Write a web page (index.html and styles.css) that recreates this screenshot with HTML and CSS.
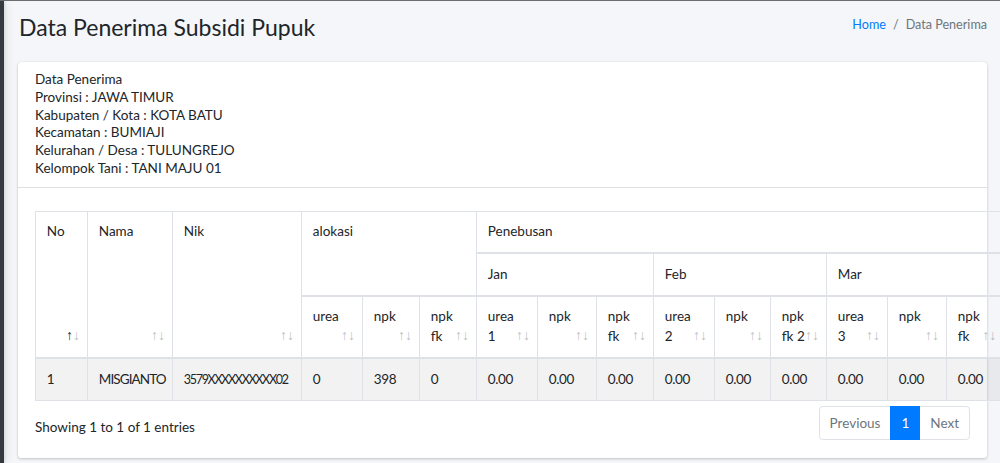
FILE: index.html
```html
<!DOCTYPE html>
<html lang="id">
<head>
<meta charset="utf-8">
<title>Data Penerima Subsidi Pupuk</title>
<link rel="stylesheet" href="styles.css">
</head>
<body>
<div class="topline"></div>
<div class="layout">
  <aside class="sidebar"></aside>
  <main class="content">
    <header class="content-header">
      <h1 class="page-title">Data Penerima Subsidi Pupuk</h1>
      <ol class="breadcrumb">
        <li class="crumb"><a class="crumb-link" href="#">Home</a></li>
        <li class="crumb sep">/</li>
        <li class="crumb active">Data Penerima</li>
      </ol>
    </header>
    <section class="card">
      <div class="card-header">
        Data Penerima<br>
        Provinsi : JAWA TIMUR<br>
        Kabupaten / Kota : KOTA BATU<br>
        Kecamatan : BUMIAJI<br>
        Kelurahan / Desa : TULUNGREJO<br>
        Kelompok Tani : TANI MAJU 01
      </div>
      <div class="card-body">
        <table class="data-table">
          <colgroup>
            <col class="w-no"><col class="w-nama"><col class="w-nik">
            <col class="w61"><col class="w57"><col class="w57">
            <col class="w61"><col class="w59"><col class="w57">
            <col class="w61"><col class="w56"><col class="w56">
            <col class="w61"><col class="w59"><col class="w57">
          </colgroup>
          <thead>
            <tr>
              <th rowspan="3" class="sort asc">No</th>
              <th rowspan="3" class="sort">Nama</th>
              <th rowspan="3" class="sort">Nik</th>
              <th rowspan="2" colspan="3">alokasi</th>
              <th colspan="9">Penebusan</th>
            </tr>
            <tr>
              <th colspan="3">Jan</th>
              <th colspan="3">Feb</th>
              <th colspan="3">Mar</th>
            </tr>
            <tr>
              <th class="sort">urea</th>
              <th class="sort">npk</th>
              <th class="sort">npk fk</th>
              <th class="sort">urea 1</th>
              <th class="sort">npk</th>
              <th class="sort">npk fk</th>
              <th class="sort">urea 2</th>
              <th class="sort">npk</th>
              <th class="sort">npk fk&nbsp;2</th>
              <th class="sort">urea 3</th>
              <th class="sort">npk</th>
              <th class="sort">npk fk</th>
            </tr>
          </thead>
          <tbody>
            <tr class="striped">
              <td>1</td><td class="nama">MISGIANTO</td><td class="nik">3579XXXXXXXXXX02</td>
              <td>0</td><td>398</td><td>0</td>
              <td>0.00</td><td>0.00</td><td>0.00</td>
              <td>0.00</td><td>0.00</td><td>0.00</td>
              <td>0.00</td><td>0.00</td><td>0.00</td>
            </tr>
          </tbody>
        </table>
        <div class="table-footer">
          <div class="info">Showing 1 to 1 of 1 entries</div>
          <ul class="pagination">
            <li class="page disabled first"><a class="page-link" href="#">Previous</a></li>
            <li class="page active"><a class="page-link" href="#">1</a></li>
            <li class="page disabled last"><a class="page-link" href="#">Next</a></li>
          </ul>
        </div>
      </div>
    </section>
  </main>
</div>
</body>
</html>
```
FILE: styles.css
```css
* { box-sizing: border-box; }
html, body {
  margin: 0;
  padding: 0;
  overflow: hidden;
  height: 100%;
}
body {
  background: #f4f6f9;
  font-family: Lato, "Open Sans", sans-serif;
  font-size: 13.5px;
  color: #212529;
}
.topline {
  height: 1px;
  background: #6a6d72;
}
.layout {
  display: flex;
  min-height: 462px;
}
.sidebar {
  width: 4px;
  flex: none;
  background: #343a40;
  box-shadow: 2px 0 10px rgba(0, 0, 0, 0.12), 1px 0 3px rgba(0, 0, 0, 0.1);
  position: relative;
  z-index: 2;
}
.content {
  flex: 1;
  min-width: 0;
  padding: 0 13px 0 14px;
}
.content-header {
  display: flex;
  justify-content: space-between;
  align-items: flex-start;
  padding: 11px 0 19px 1px;
}
.page-title {
  margin: 0;
  font-size: 23px;
  line-height: 31px;
  font-weight: 400;
  color: #212529;
}
.breadcrumb {
  list-style: none;
  margin: 0;
  padding: 0;
  display: flex;
  font-size: 12.6px;
  line-height: 26px;
}
.crumb.sep {
  color: #6c757d;
  padding: 0 7px;
}
.crumb.active { color: #6c757d; }
.crumb-link {
  color: #007bff;
  text-decoration: none;
}
.card {
  background: #fff;
  border-radius: 3.6px;
  box-shadow: 0 0 1px rgba(0, 0, 0, 0.125), 0 1px 3px rgba(0, 0, 0, 0.2);
}
.card-header {
  padding: 9px 17px;
  line-height: 17.8px;
  border-bottom: 1px solid rgba(0, 0, 0, 0.125);
}
.card-body {
  padding: 23px 17px 18px;
}
.data-table {
  border-collapse: collapse;
  table-layout: fixed;
  width: 968px;
  line-height: 19.5px;
}
.w-no { width: 52px; }
.w-nama { width: 85px; }
.w-nik { width: 129px; }
.w61 { width: 61px; }
.w59 { width: 59px; }
.w57 { width: 57px; }
.w56 { width: 56px; }
.data-table th,
.data-table td {
  border: 1px solid #dee2e6;
  padding: 10.5px 10.8px;
  text-align: left;
  vertical-align: top;
}
.data-table td {
  padding: 11px 10.8px;
  letter-spacing: -0.4px;
  white-space: nowrap;
}
.data-table td.nama {
  letter-spacing: -0.9px;
}
.data-table td.nik {
  font-size: 12.5px;
  letter-spacing: -1.3px;
}
.data-table th {
  font-weight: 400;
  border-bottom-width: 2px;
}
.data-table th.sort {
  position: relative;
  padding-right: 27px;
}
.data-table th.sort::before,
.data-table th.sort::after {
  position: absolute;
  bottom: 15px;
  font-family: "Liberation Sans", sans-serif;
  font-size: 14px;
  line-height: 14px;
  opacity: 0.3;
}
.data-table th.sort::before {
  content: "\2191";
  right: 14px;
}
.data-table th.sort::after {
  content: "\2193";
  right: 7px;
}
.data-table th.asc::before { opacity: 1; }
.striped td {
  background: rgba(0, 0, 0, 0.05);
}
.table-footer {
  display: flex;
  justify-content: space-between;
  align-items: flex-start;
  width: 935px;
  padding-top: 5px;
}
.info {
  padding-top: 11px;
  line-height: 20px;
}
.pagination {
  list-style: none;
  margin: 0;
  padding: 0;
  display: flex;
}
.page-link {
  display: block;
  padding: 7px 10px;
  line-height: 18px;
  border: 1px solid #dee2e6;
  margin-left: -1px;
  color: #6c757d;
  background: #fff;
  text-decoration: none;
}
.page.first .page-link {
  margin-left: 0;
  border-radius: 3.6px 0 0 3.6px;
}
.page.last .page-link {
  border-radius: 0 3.6px 3.6px 0;
}
.page.active .page-link {
  background: #007bff;
  border-color: #007bff;
  color: #fff;
  position: relative;
  z-index: 1;
}
```
